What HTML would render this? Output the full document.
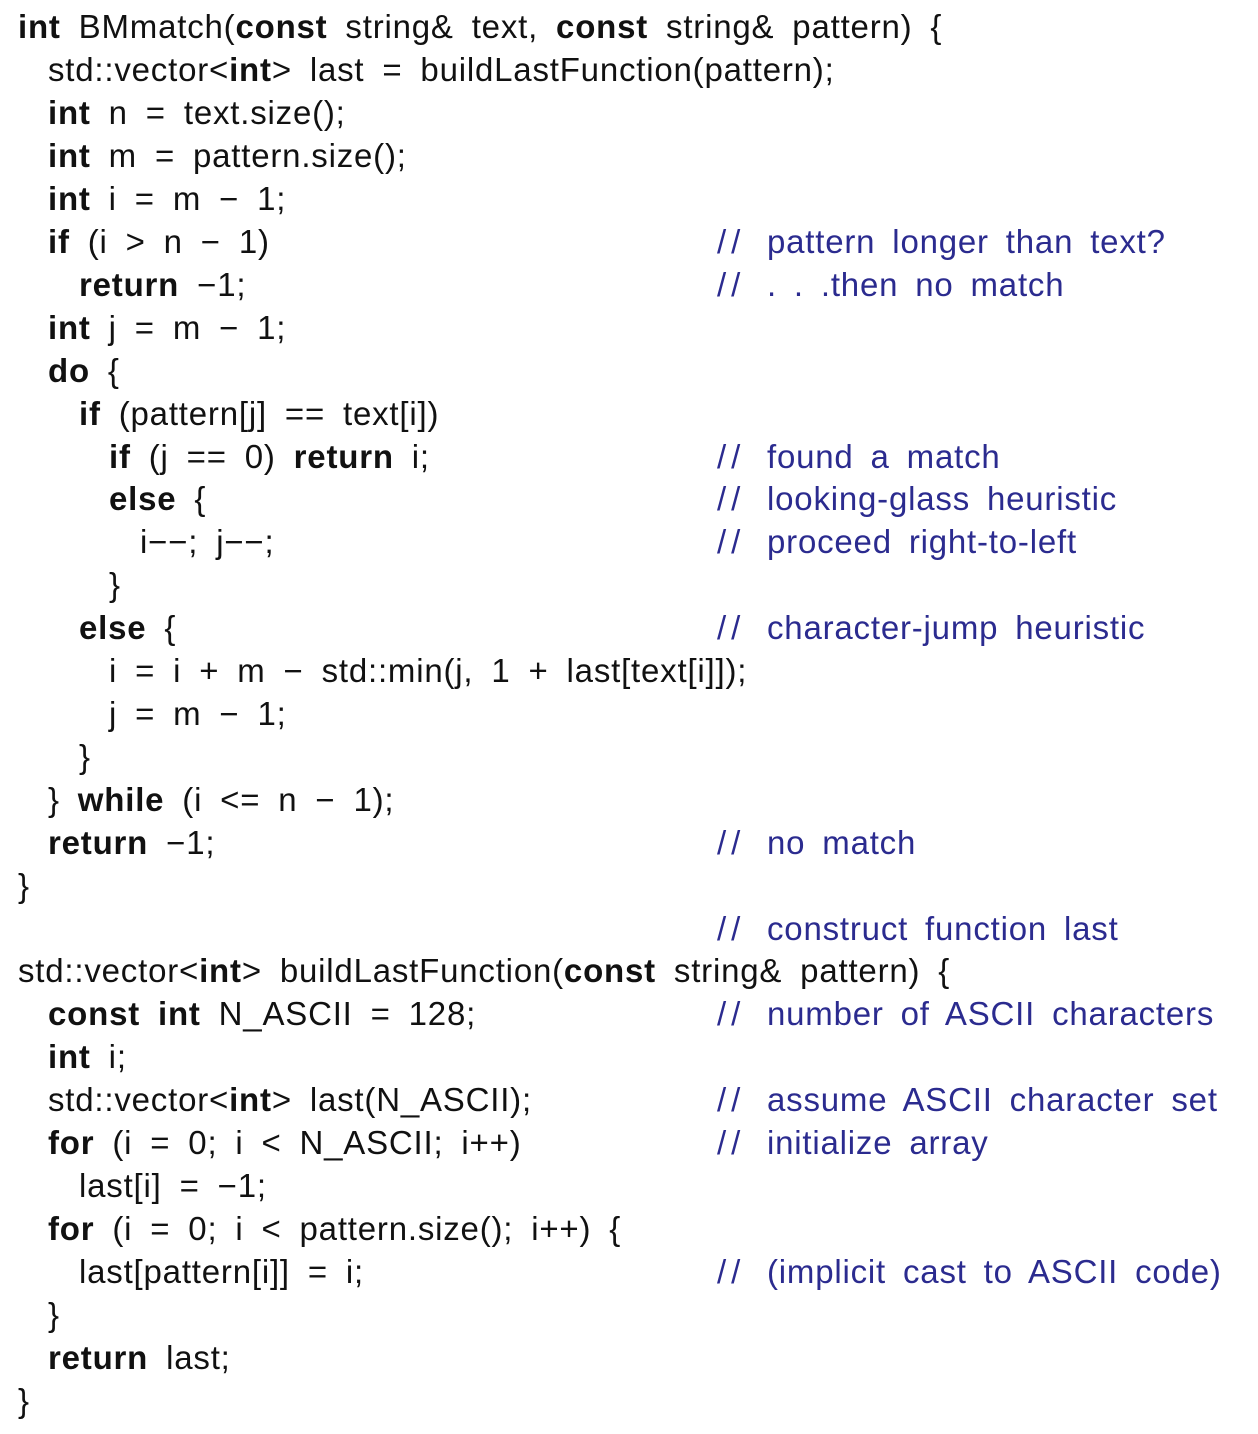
<!DOCTYPE html><html><head><meta charset="utf-8"><style>
body{margin:0;width:1258px;height:1434px;background:#fff;position:relative;overflow:hidden;font-family:"Liberation Sans",sans-serif;font-size:33px;color:#111}
.l{position:absolute;white-space:pre;line-height:40px;word-spacing:8px;letter-spacing:0.8px}
.c{position:absolute;left:717px;white-space:pre;line-height:40px;color:#2b2b8f;word-spacing:7px;letter-spacing:0.8px}
.c i{font-style:normal;letter-spacing:5px;display:inline-block;width:50px}
b{font-weight:bold}
</style></head><body>
<div class="l" style="left:18px;top:7px"><b>int</b> BMmatch(<b>const</b> string&amp; text, <b>const</b> string&amp; pattern) {</div>
<div class="l" style="left:48px;top:50px">std::vector&lt;<b>int</b>&gt; last = buildLastFunction(pattern);</div>
<div class="l" style="left:48px;top:93px"><b>int</b> n = text.size();</div>
<div class="l" style="left:48px;top:136px"><b>int</b> m = pattern.size();</div>
<div class="l" style="left:48px;top:179px"><b>int</b> i = m − 1;</div>
<div class="l" style="left:48px;top:222px"><b>if</b> (i &gt; n − 1)</div>
<div class="c" style="top:222px"><i>//</i>pattern longer than text?</div>
<div class="l" style="left:79px;top:265px"><b>return</b> −1;</div>
<div class="c" style="top:265px"><i>//</i>. . .then no match</div>
<div class="l" style="left:48px;top:308px"><b>int</b> j = m − 1;</div>
<div class="l" style="left:48px;top:351px"><b>do</b> {</div>
<div class="l" style="left:79px;top:394px"><b>if</b> (pattern[j] == text[i])</div>
<div class="l" style="left:109px;top:437px"><b>if</b> (j == 0) <b>return</b> i;</div>
<div class="c" style="top:437px"><i>//</i>found a match</div>
<div class="l" style="left:109px;top:479px"><b>else</b> {</div>
<div class="c" style="top:479px"><i>//</i>looking-glass heuristic</div>
<div class="l" style="left:140px;top:522px">i−−; j−−;</div>
<div class="c" style="top:522px"><i>//</i>proceed right-to-left</div>
<div class="l" style="left:109px;top:565px">}</div>
<div class="l" style="left:79px;top:608px"><b>else</b> {</div>
<div class="c" style="top:608px"><i>//</i>character-jump heuristic</div>
<div class="l" style="left:109px;top:651px">i = i + m − std::min(j, 1 + last[text[i]]);</div>
<div class="l" style="left:109px;top:694px">j = m − 1;</div>
<div class="l" style="left:79px;top:737px">}</div>
<div class="l" style="left:48px;top:780px">} <b>while</b> (i &lt;= n − 1);</div>
<div class="l" style="left:48px;top:823px"><b>return</b> −1;</div>
<div class="c" style="top:823px"><i>//</i>no match</div>
<div class="l" style="left:18px;top:866px">}</div>
<div class="c" style="top:909px"><i>//</i>construct function last</div>
<div class="l" style="left:18px;top:951px">std::vector&lt;<b>int</b>&gt; buildLastFunction(<b>const</b> string&amp; pattern) {</div>
<div class="l" style="left:48px;top:994px"><b>const int</b> N_ASCII = 128;</div>
<div class="c" style="top:994px"><i>//</i>number of ASCII characters</div>
<div class="l" style="left:48px;top:1037px"><b>int</b> i;</div>
<div class="l" style="left:48px;top:1080px">std::vector&lt;<b>int</b>&gt; last(N_ASCII);</div>
<div class="c" style="top:1080px"><i>//</i>assume ASCII character set</div>
<div class="l" style="left:48px;top:1123px"><b>for</b> (i = 0; i &lt; N_ASCII; i++)</div>
<div class="c" style="top:1123px"><i>//</i>initialize array</div>
<div class="l" style="left:79px;top:1166px">last[i] = −1;</div>
<div class="l" style="left:48px;top:1209px"><b>for</b> (i = 0; i &lt; pattern.size(); i++) {</div>
<div class="l" style="left:79px;top:1252px">last[pattern[i]] = i;</div>
<div class="c" style="top:1252px"><i>//</i>(implicit cast to ASCII code)</div>
<div class="l" style="left:48px;top:1295px">}</div>
<div class="l" style="left:48px;top:1338px"><b>return</b> last;</div>
<div class="l" style="left:18px;top:1381px">}</div>
</body></html>
